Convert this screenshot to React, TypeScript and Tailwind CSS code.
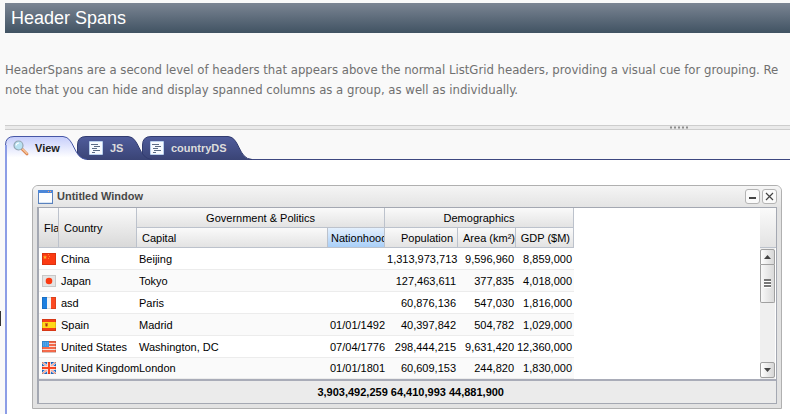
import { useState } from "react";

const tabs = [
  { name: "View", width: 82, className: "z-20 gap-[6px] pl-2" },
  { name: "JS", width: 75, className: "z-10 -ml-[10px] gap-[7px] pl-3" },
  { name: "countryDS", width: 110, className: "-ml-[10px] gap-[7px] pl-2" },
];

const countries = [
  { code: "cn", name: "China", capital: "Beijing", nationhood: "", population: "1,313,973,713", area: "9,596,960", gdp: "8,859,000" },
  { code: "jp", name: "Japan", capital: "Tokyo", nationhood: "", population: "127,463,611", area: "377,835", gdp: "4,018,000" },
  { code: "fr", name: "asd", capital: "Paris", nationhood: "", population: "60,876,136", area: "547,030", gdp: "1,816,000" },
  { code: "es", name: "Spain", capital: "Madrid", nationhood: "01/01/1492", population: "40,397,842", area: "504,782", gdp: "1,029,000" },
  { code: "us", name: "United States", capital: "Washington, DC", nationhood: "07/04/1776", population: "298,444,215", area: "9,631,420", gdp: "12,360,000" },
  { code: "gb", name: "United Kingdom", capital: "London", nationhood: "01/01/1801", population: "60,609,153", area: "244,820", gdp: "1,830,000" },
];

function Flag({ code }: { code: string }) {
  return (
    <svg width="14" height="12" viewBox="0 0 14 12" className="block">
      {code === "cn" && (
        <>
          <rect width="14" height="12" fill="#fb3a12" />
          <path d="M3 2l.6 1.4 1.4.1-1 1 .3 1.5L3 5.2l-1.3.8.3-1.5-1-1 1.4-.1z" fill="#ffb02a" />
          <path d="M6 1h1v1H6zM7 3h1v1H7zM6 5h1v1H6z" fill="#ff8a2a" />
        </>
      )}
      {code === "jp" && (
        <>
          <rect width="14" height="12" fill="#e4e4e4" />
          <circle cx="7" cy="6" r="3.3" fill="#fb3a12" />
        </>
      )}
      {code === "fr" && (
        <>
          <rect width="14" height="12" fill="#f4f4f4" />
          <rect width="5" height="12" fill="#1d7fe0" />
          <rect x="9" width="5" height="12" fill="#fb4a22" />
        </>
      )}
      {code === "es" && (
        <>
          <rect width="14" height="12" fill="#f5401a" />
          <rect y="3" width="14" height="6" fill="#ffd91a" />
          <path d="M3 4h3v3l-1.5 1L3 7z" fill="#d8761a" />
          <path d="M4 5h1v2H4z" fill="#a03a1a" />
        </>
      )}
      {code === "us" && (
        <>
          <rect width="14" height="12" fill="#f8ded8" />
          <path d="M0 1h14M0 4h14M0 7h14M0 10h14" stroke="#f4694a" strokeWidth="2" />
          <rect width="7" height="6" fill="#3a96e4" />
          <path d="M1 2h5M1 4h5" stroke="#6ab4ee" strokeDasharray="1 1" />
        </>
      )}
      {code === "gb" && (
        <>
          <rect width="14" height="12" fill="#1f74d6" />
          <path d="M0 0l14 12M14 0L0 12" stroke="#f0e4e8" strokeWidth="2.4" />
          <path d="M0 0l14 12M14 0L0 12" stroke="#f4704e" strokeWidth=".8" />
          <path d="M7 0v12M0 6h14" stroke="#fbe0da" strokeWidth="4" />
          <path d="M7 0v12M0 6h14" stroke="#fb4420" strokeWidth="2" />
        </>
      )}
      <rect x=".5" y=".5" width="13" height="11" fill="none" stroke="#000" strokeOpacity=".12" />
    </svg>
  );
}

function TabShape({ width, active }: { width: number; active: boolean }) {
  const outline = `M.5 24V9Q.5 .5 9 .5H${width - 24}C${width - 12} 1 ${width - 14} 23 ${width} 23.5`;
  return (
    <svg width={width} height="24" viewBox={`0 0 ${width} 24`} className="absolute left-0 top-0 -z-10">
      <defs>
        <linearGradient id="tabOn" x1="0" y1="0" x2="0" y2="1">
          <stop offset="0" stopColor="#c5cdfb" />
          <stop offset="0.9" stopColor="#ffffff" />
        </linearGradient>
        <linearGradient id="tabOff" x1="0" y1="0" x2="0" y2="1">
          <stop offset="0" stopColor="#4f5c9c" />
          <stop offset="1" stopColor="#3a4475" />
        </linearGradient>
      </defs>
      <path d={`${outline}V24Z`} fill={active ? "url(#tabOn)" : "url(#tabOff)"} />
      <path d={outline} fill="none" stroke={active ? "#4757a6" : "#323c70"} />
      {active && <path d="M1 24V9" stroke="#8c9de6" strokeWidth="2" />}
    </svg>
  );
}

function SearchIcon() {
  return (
    <svg width="16" height="16" viewBox="0 0 16 16">
      <path d="M9 9l5 5" stroke="#d9824a" strokeWidth="2.8" strokeLinecap="round" />
      <path d="M9.5 9l4.5 4.5" stroke="#f8c8a0" strokeWidth="1.2" strokeLinecap="round" />
      <circle cx="5.5" cy="5.5" r="4.5" fill="#b9e2f2" stroke="#93a5b2" strokeWidth="1.2" />
      <path d="M3 5.5Q3.5 3 6 3" stroke="#fff" strokeWidth="1.2" fill="none" />
    </svg>
  );
}

function ScriptIcon() {
  return (
    <svg width="14" height="14" viewBox="0 0 14 14">
      <rect width="14" height="14" rx="1" fill="#b9d0ee" />
      <rect x="1" y="1" width="12" height="12" fill="#f6faff" />
      <path d="M2 3.5h7M5 5.5h6M3 7.5h5M4 9.5h7M3 11.5h3" stroke="#5b6c86" />
    </svg>
  );
}

const headCell = "overflow-hidden whitespace-nowrap border-b border-r border-[#bcc2cc] bg-linear-to-b p-0 font-normal";
const headFill = "from-[#fafafa] to-[#e3e3e3]";
const headFillTall = "from-[#fafafa] to-[#d9d9d9]";
const bodyCell = "whitespace-nowrap border-b border-[#ececec] py-0";

function Grid() {
  return (
    <table className="w-[535px] table-fixed border-separate border-spacing-0 text-[11px] leading-[14px] text-black">
      <colgroup>
        <col className="w-[20px]" />
        <col className="w-[78px]" />
        <col className="w-[191px]" />
        <col className="w-[57px]" />
        <col className="w-[73px]" />
        <col className="w-[58px]" />
        <col className="w-[58px]" />
      </colgroup>
      <thead>
        <tr className="h-5">
          <th rowSpan={2} className={`${headCell} ${headFillTall} pl-[5px] text-left`}>Flag</th>
          <th rowSpan={2} className={`${headCell} ${headFillTall} pl-[5px] text-left`}>Country</th>
          <th colSpan={2} className={`${headCell} ${headFill}`}>Government &amp; Politics</th>
          <th colSpan={3} className={`${headCell} ${headFill}`}>Demographics</th>
        </tr>
        <tr className="h-5">
          <th className={`${headCell} ${headFill} pl-[5px] text-left`}>Capital</th>
          <th className={`${headCell} from-[#e4f0fd] to-[#a9cff8] pl-[3px] text-left`}>Nationhood</th>
          <th className={`${headCell} ${headFill} pr-1 text-right`}>Population</th>
          <th className={`${headCell} ${headFill} pl-[5px] text-left`}>Area (km²)</th>
          <th className={`${headCell} ${headFill} pr-[3px] text-right`}>GDP ($M)</th>
        </tr>
      </thead>
      <tbody>
        {countries.map((c) => (
          <tr key={c.code} className="h-[22px] last:h-[21px] even:bg-[#fafafa]">
            <td className={`${bodyCell} pl-[3px] pr-0`}><Flag code={c.code} /></td>
            <td className={`${bodyCell} pl-[2px] pr-0`}>{c.name}</td>
            <td className={`${bodyCell} px-[2px]`}>{c.capital}</td>
            <td className={`${bodyCell} px-[2px] text-right`}>{c.nationhood}</td>
            <td className={`${bodyCell} px-[2px] text-right`}>{c.population}</td>
            <td className={`${bodyCell} px-[2px] text-right`}>{c.area}</td>
            <td className={`${bodyCell} pl-0 pr-[2px] text-right`}>{c.gdp}</td>
          </tr>
        ))}
      </tbody>
    </table>
  );
}

function Scrollbar() {
  return (
    <div className="flex w-4 flex-col">
      <div className="h-10 border-b border-[#bcc2cc] bg-linear-to-b from-[#fafafa] to-[#e3e3e3]" />
      <div className="mr-px flex flex-1 flex-col bg-[#efefef] pt-px">
        <button aria-label="Scroll up" className="flex h-4 items-center justify-center rounded-t-[2px] border border-[#a0a0a0] bg-linear-to-r from-white to-[#d6d6d6]">
          <svg width="7" height="4" viewBox="0 0 7 4"><path d="M3.5 0L7 4H0z" fill="#444" /></svg>
        </button>
        <div className="flex h-[38px] items-center justify-center rounded-b-[2px] border border-t-0 border-[#a0a0a0] bg-linear-to-r from-[#f8f8f8] to-[#dadada]">
          <svg width="7" height="9" viewBox="0 0 7 9"><path d="M0 1h7M0 4h7M0 7h7" stroke="#777" strokeWidth="2" /><path d="M0 2.5h7M0 5.5h7M0 8.5h7" stroke="#fff" /></svg>
        </div>
        <button aria-label="Scroll down" className="mb-px mt-auto flex h-4 items-center justify-center rounded-[2px] border border-[#a0a0a0] bg-linear-to-r from-white to-[#d6d6d6]">
          <svg width="7" height="4" viewBox="0 0 7 4"><path d="M3.5 4L7 0H0z" fill="#444" /></svg>
        </button>
      </div>
    </div>
  );
}

const windowButton = "flex size-[15px] items-center justify-center rounded-[3px] border border-[#b4b4b4] bg-[#fafafa]";

function GridWindow() {
  return (
    <section className="rounded-t-[6px] border border-[#b0b0b0] bg-[#e2e2e2] px-1 pb-1">
      <header className="-mx-1 flex h-[21px] items-center gap-1 rounded-t-[5px] bg-linear-to-b from-[#f5f5f5] to-[#e4e4e4] px-1 pl-[5px]">
        <svg width="15" height="14" viewBox="0 0 15 14">
          <rect x=".5" y=".5" width="14" height="13" fill="#fdfeff" stroke="#5a82bd" />
          <path d="M0 1.5h15" stroke="#4a86d8" strokeWidth="3" />
          <path d="M10 1.5h1M12 1.5h1" stroke="#ff9a6a" />
          <path d="M1 12.5h13" stroke="#d9e6f5" />
        </svg>
        <h2 className="flex-1 text-[11px] font-bold text-[#484848]">Untitled Window</h2>
        <div className="flex gap-[2px]">
          <button aria-label="Minimize" className={windowButton}>
            <svg width="9" height="9" viewBox="0 0 9 9"><path d="M1 6h7" stroke="#444" strokeWidth="2" /></svg>
          </button>
          <button aria-label="Close" className={windowButton}>
            <svg width="9" height="9" viewBox="0 0 9 9"><path d="M1 1l7 7M8 1L1 8" stroke="#444" strokeWidth="1.2" /></svg>
          </button>
        </div>
      </header>
      <div className="border border-l-2 border-[#a4a8b2] bg-white">
        <div className="flex justify-between">
          <Grid />
          <Scrollbar />
        </div>
        <div className="flex h-6 items-center border-t-2 border-[#a9acb8] bg-[#ebebeb] text-[11px] font-bold text-black">
          <p className="w-[465px] whitespace-nowrap text-right">3,903,492,259 64,410,993 44,881,900</p>
        </div>
      </div>
    </section>
  );
}

export default function App() {
  const [active, setActive] = useState("View");

  return (
    <div className="relative flex min-h-screen flex-col overflow-hidden bg-[#f9f9f9] pl-[5px] pt-[3px] font-['Liberation_Sans',Arial,sans-serif]">
      <h1 className="bg-linear-to-b from-[#7b8593] to-[#415363] px-1.5 text-[18px] leading-[30px] text-white">Header Spans</h1>

      <p className="mt-[27px] overflow-hidden whitespace-nowrap font-['DejaVu_Sans_Condensed','DejaVu_Sans',sans-serif] text-[13px] leading-5 text-[#707070]">
        HeaderSpans are a second level of headers that appears above the normal ListGrid headers, providing a visual cue for grouping. Re
        <br />
        note that you can hide and display spanned columns as a group, as well as individually.
      </p>

      {/* Splitter */}
      <div className="mt-[25px] flex h-[5px] items-center justify-end border-y border-[#cdcdcd] bg-[#eaeaea] pr-[101px]">
        <svg width="19" height="3" viewBox="0 0 19 3"><path d="M0 1.5h19" stroke="#8c8c8c" strokeWidth="2" strokeDasharray="2 2" /></svg>
      </div>

      <nav className="isolate mt-[6px] flex h-6 items-stretch border-b border-[#3d4780]">
        {tabs.map((tab, i) => (
          <button
            key={tab.name}
            onClick={() => setActive(tab.name)}
            className={`relative isolate -mb-px flex items-center text-[11px] font-bold ${tab.className} ${active === tab.name ? "text-[#222]" : "text-[#dcdcdc]"}`}
            style={{ width: tab.width }}
          >
            <TabShape width={tab.width} active={active === tab.name} />
            {i === 0 ? <SearchIcon /> : <ScriptIcon />}
            {tab.name}
          </button>
        ))}
      </nav>

      <main className="flex-1 border-l-2 border-[#8c9de6] bg-white pb-[5px] pl-[25px] pr-2 pt-[25px]">
        <GridWindow />
      </main>

      {/* Collapsed side panel handle */}
      <div className="absolute left-0 top-[311px] h-[15px] w-px bg-[#333]" />
    </div>
  );
}
